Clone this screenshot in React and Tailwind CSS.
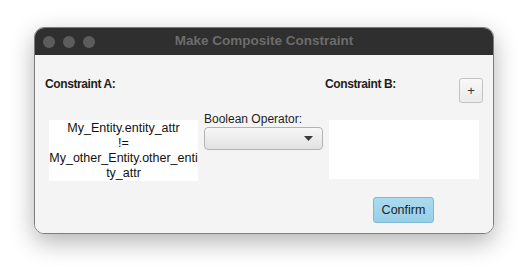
export default function App() {
  const font = { fontFamily: '"Liberation Sans", Arial, sans-serif' };
  return (
    <div className="w-[528px] h-[276px] bg-white overflow-hidden" style={font}>
      <div className="ml-[34px] mt-[27px] w-[460px] h-[207px] flex flex-col rounded-[10px] border border-[#7d7d7d] overflow-hidden shadow-[0_8px_24px_rgba(0,0,0,0.3)]">
        {/* Title bar */}
        <div className="relative h-[27px] shrink-0 bg-[#2f2f2f] flex items-center">
          <div className="flex gap-[8px] pl-[8px]">
            <span className="w-[12px] h-[12px] rounded-full bg-[#5c5c5c]" />
            <span className="w-[12px] h-[12px] rounded-full bg-[#5c5c5c]" />
            <span className="w-[12px] h-[12px] rounded-full bg-[#5c5c5c]" />
          </div>
          <div className="absolute inset-0 flex items-center justify-center text-[13.5px] font-bold text-[#6c6c6c]">
            Make Composite Constraint
          </div>
        </div>
        {/* Content */}
        <div className="flex-1 bg-[#f4f4f4] flex flex-col">
          <div className="flex pl-[10px]">
            {/* Column A */}
            <div className="w-[159px] flex flex-col">
              <div className="mt-[22px] h-[14px] leading-[14px] text-[12px] tracking-[-0.4px] font-bold text-[#1e1e1e]">Constraint A:</div>
              <div className="ml-[4px] mt-[29px] w-[149px] h-[61px] bg-white flex flex-col items-center justify-center text-[12.5px] leading-[15px] text-[#111]">
                <span>My_Entity.entity_attr</span>
                <span>!=</span>
                <span>My_other_Entity.other_enti</span>
                <span>ty_attr</span>
              </div>
            </div>
            {/* Column middle */}
            <div className="w-[121px] flex flex-col">
              <div className="mt-[56px] h-[16px] leading-[16px] text-[12px] text-[#1e1e1e]">Boolean Operator:</div>
              <div className="w-[119px] h-[23px] rounded-[4px] border border-[#b3b3b3] bg-gradient-to-b from-[#f7f7f7] to-[#e2e2e2] flex items-center justify-end pr-[9px]">
                <svg width="9" height="5" viewBox="0 0 9 5">
                  <path d="M0 0 L9 0 L4.5 5 Z" fill="#3a3a3a" />
                </svg>
              </div>
            </div>
            {/* Column B */}
            <div className="w-[158px] flex flex-col">
              <div className="mt-[22px] flex justify-between">
                <div className="h-[14px] leading-[14px] text-[12px] tracking-[-0.4px] font-bold text-[#1e1e1e]">Constraint B:</div>
                <div className="mt-[1px] w-[24px] h-[25px] rounded-[3px] border border-[#c2c2c2] bg-gradient-to-b from-[#f8f8f8] to-[#ebebeb] flex items-center justify-center text-[13px] leading-none text-[#333]">
                  +
                </div>
              </div>
              <div className="ml-[4px] mt-[17px] w-[150px] h-[59px] bg-white" />
            </div>
          </div>
          <div className="pl-[338px] mt-[16px]">
            <div className="w-[61px] h-[26px] rounded-[3px] border border-[#7fb9d3] bg-gradient-to-b from-[#a9daef] to-[#98cfe7] flex items-center justify-center text-[12.5px] text-[#222]">
              Confirm
            </div>
          </div>
        </div>
      </div>
    </div>
  );
}
